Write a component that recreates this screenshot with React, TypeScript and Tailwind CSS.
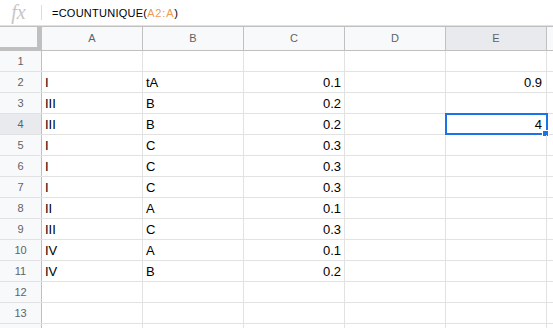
import React from "react";

type Row = { a: string; b: string; c: string; e?: string };

const rows: Row[] = [
  { a: "", b: "", c: "" },
  { a: "I", b: "tA", c: "0.1", e: "0.9" },
  { a: "III", b: "B", c: "0.2" },
  { a: "III", b: "B", c: "0.2", e: "4" },
  { a: "I", b: "C", c: "0.3" },
  { a: "I", b: "C", c: "0.3" },
  { a: "I", b: "C", c: "0.3" },
  { a: "II", b: "A", c: "0.1" },
  { a: "III", b: "C", c: "0.3" },
  { a: "IV", b: "A", c: "0.1" },
  { a: "IV", b: "B", c: "0.2" },
  { a: "", b: "", c: "" },
  { a: "", b: "", c: "" },
  { a: "", b: "", c: "" },
];

const cols = ["A", "B", "C", "D", "E"];

export default function App() {
  return (
    <div className="w-[553px] h-[328px] overflow-hidden bg-white font-['Liberation_Sans',Arial,sans-serif]">
      {/* formula bar */}
      <div className="flex h-[26px] items-center border-b border-[#e0e0e0] bg-white">
        <div className="flex w-[41px] h-full items-center justify-center">
          <span className="font-['Liberation_Serif',serif] italic text-[20px] leading-none text-[#c6c6c6] -mt-[2px] pr-[4px]">
            fx
          </span>
        </div>
        <div className="h-[15px] w-px bg-[#dadce0]" />
        <div className="pl-[10px] text-[11px] leading-none text-[#000] tracking-[0.25px] pt-[1px]">
          =COUNTUNIQUE(<span className="text-[#f09a4b] tracking-[0.8px]">A2:A</span>)
        </div>
      </div>

      {/* header row */}
      <div className="flex h-[25px] border-t border-[#c0c0c0] border-b border-b-[#c0c0c0]">
        <div className="w-[42px] shrink-0 h-full box-border bg-[#f8f9fa] border-r-[5px] border-b-[3px] border-[#c0c0c0]" />
        {cols.map((c) => (
          <div
            key={c}
            className={`w-[101px] shrink-0 h-full border-r border-[#c0c0c0] flex items-center justify-center text-[11px] text-[#5f6368] ${
              c === "E" ? "bg-[#e8eaed]" : "bg-[#f8f9fa]"
            }`}
          >
            {c}
          </div>
        ))}
        <div className="flex-1 bg-[#f8f9fa]" />
      </div>

      {/* body */}
      {rows.map((r, i) => {
        const selected = i === 3;
        return (
          <div key={i} className="flex h-[21px] border-b border-[#e2e2e2] relative">
            <div
              className={`w-[42px] shrink-0 border-r border-[#c0c0c0] flex items-center justify-center text-[11px] text-[#5f6368] ${
                selected ? "bg-[#e8eaed]" : "bg-[#f8f9fa]"
              }`}
            >
              {i < 13 ? i + 1 : ""}
            </div>
            <div className="w-[101px] shrink-0 border-r border-[#e2e2e2] flex items-end pb-[2px] pl-[3px] text-[13px] leading-[15px] text-black">
              {r.a}
            </div>
            <div className="w-[101px] shrink-0 border-r border-[#e2e2e2] flex items-end pb-[2px] pl-[3px] text-[13px] leading-[15px] text-black">
              {r.b}
            </div>
            <div className="w-[101px] shrink-0 border-r border-[#e2e2e2] flex items-end justify-end pb-[2px] pr-[3px] text-[13px] leading-[15px] text-black">
              {r.c}
            </div>
            <div className="w-[101px] shrink-0 border-r border-[#e2e2e2]" />
            <div className="w-[101px] shrink-0 border-r border-[#e2e2e2] flex items-end justify-end pb-[2px] pr-[4px] text-[13px] leading-[15px] text-black relative">
              {r.e ?? ""}
              {selected && (
                <>
                  <div className="absolute left-[-1px] top-[-1px] w-[103px] h-[22px] border-2 border-[#1a73e8]" />
                  <div className="absolute left-[96px] top-[16px] w-[7px] h-[7px] bg-[#1a73e8] border border-white" />
                </>
              )}
            </div>
            <div className="flex-1" />
          </div>
        );
      })}
    </div>
  );
}
